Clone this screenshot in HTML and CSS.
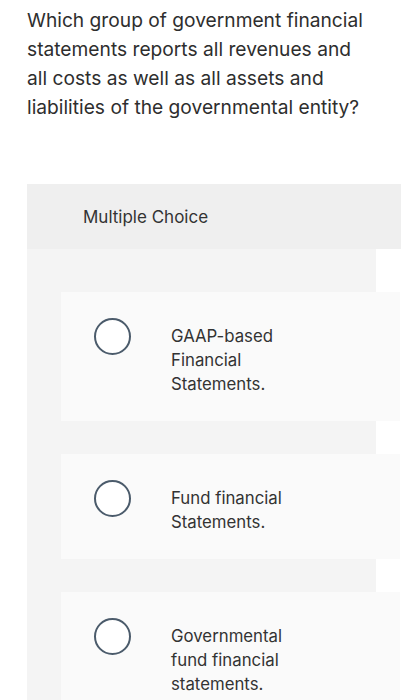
FILE: index.html
```html
<!DOCTYPE html>
<html>
<head>
<meta charset="utf-8">
<link rel="stylesheet" href="styles.css">
</head>
<body>
<p class="question">Which group of government financial statements reports all revenues and all costs as well as all assets and liabilities of the governmental entity?</p>
<div class="mc">
  <div class="mc-header">Multiple Choice</div>
  <div class="mc-body">
    <div class="option">
      <span class="radio"></span>
      <span class="label">GAAP-based Financial Statements.</span>
    </div>
    <div class="option">
      <span class="radio"></span>
      <span class="label">Fund financial Statements.</span>
    </div>
    <div class="option">
      <span class="radio"></span>
      <span class="label">Governmental fund financial statements.</span>
    </div>
  </div>
</div>
</body>
</html>
```

FILE: styles.css
```css
html, body {
  margin: 0;
  padding: 0;
  background: #ffffff;
}
body {
  font-family: Inter, "Liberation Sans", sans-serif;
  font-variant-ligatures: none;
  color: #333333;
  width: 415px;
  overflow: hidden;
}
.question {
  margin: 0;
  padding: 6px 45px 0 27px;
  font-size: 19.2px;
  line-height: 29px;
  color: #2e2e2e;
}
.mc {
  margin: 62px 0 0 27px;
  width: 374px;
}
.mc-header {
  height: 65px;
  background: #efefef;
  display: flex;
  align-items: center;
  padding-left: 56px;
  font-size: 17px;
  color: #333333;
}
.mc-body {
  width: 349px;
  background: #f4f4f4;
  padding-top: 43px;
  display: flex;
  flex-direction: column;
  gap: 33px;
}
.option {
  margin-left: 34px;
  width: 339px;
  flex: none;
  background: #fafafa;
  padding: 32px 0 25px;
  display: flex;
  align-items: flex-start;
}
.radio {
  flex: none;
  width: 33px;
  height: 33px;
  margin: -6px 0 0 33px;
  border: 2px solid #4b5b6b;
  border-radius: 50%;
  background: #ffffff;
}
.label {
  margin-left: 40px;
  width: 125px;
  font-size: 16.8px;
  line-height: 24px;
  color: #333333;
}
```
